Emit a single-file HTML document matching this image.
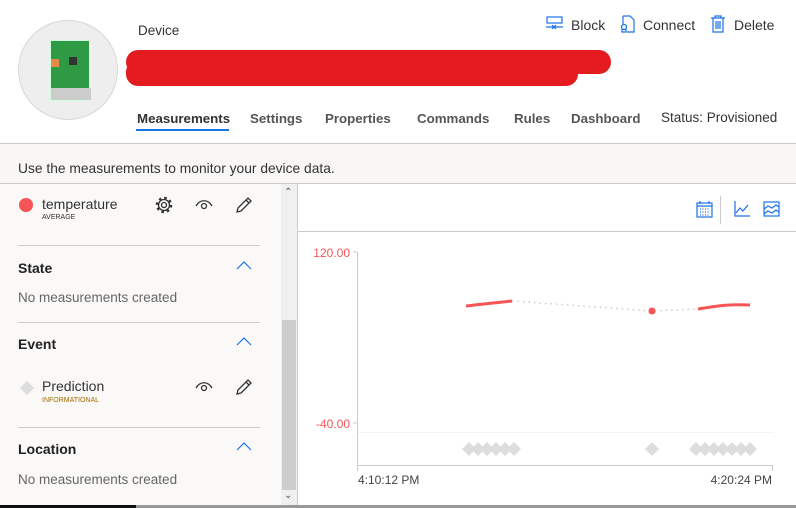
<!DOCTYPE html>
<html><head><style>
*{margin:0;padding:0;box-sizing:border-box}
body{width:796px;height:508px;overflow:hidden;background:#fff;font-family:"Liberation Sans",sans-serif;color:#333;position:relative}
.a{position:absolute}
.tab{position:absolute;top:111px;font-size:13.3px;font-weight:bold;color:#555}
.sec{position:absolute;left:18px;font-size:14px;font-weight:bold;color:#222}
.none{position:absolute;left:18px;font-size:13.5px;color:#666}
.hr{position:absolute;left:18px;width:242px;height:1px;background:#ccc}
.chev{position:absolute;left:236px}
</style></head><body>
<div class="a" style="left:18px;top:20px;width:100px;height:100px;border-radius:50%;background:#eeeeee;border:1px solid #d8d8d8"></div>
<div class="a" style="left:50px;top:40px;width:40px;height:61px;background:#2f9a44;border:1px solid #cfd">
<div class="a" style="left:0;top:18px;width:8px;height:8px;background:#e8894a"></div>
<div class="a" style="left:18px;top:16px;width:8px;height:8px;background:#333"></div>
<div class="a" style="left:0;bottom:0;width:40px;height:12px;background:#ccc"></div></div>
<div class="a" style="left:138px;top:23px;font-size:13.5px;color:#333">Device</div>
<div class="a" style="left:126px;top:50px;width:485px;height:24px;border-radius:12px;background:#e41c1f"></div>
<div class="a" style="left:126px;top:60px;width:452px;height:26px;border-radius:12px;background:#e41c1f"></div>
<div class="tab" style="left:137px;color:#333">Measurements</div>
<div class="a" style="left:136px;top:129px;width:93px;height:2px;background:#1a73e8"></div>
<div class="tab" style="left:250px">Settings</div>
<div class="tab" style="left:325px">Properties</div>
<div class="tab" style="left:417px">Commands</div>
<div class="tab" style="left:514px">Rules</div>
<div class="tab" style="left:571px">Dashboard</div>
<div class="a" style="left:661px;top:110px;font-size:13.5px;color:#333">Status: Provisioned</div>
<svg class="a" style="left:546px;top:16px" width="18" height="16" fill="none" stroke="#1a73e8" stroke-width="1.2"><rect x="1" y="1" width="15" height="6"/><path d="M0 11h17M6 9l4 4M10 9l-4 4"/></svg>
<div class="a" style="left:571px;top:17px;font-size:14px;color:#333">Block</div>
<svg class="a" style="left:620px;top:15px" width="16" height="18" fill="none" stroke="#1a73e8" stroke-width="1.2"><path d="M3 1h7l4 4v12H7M3 1v8"/><circle cx="4" cy="12" r="2.5"/><path d="M2 14v3h4v-3"/></svg>
<div class="a" style="left:643px;top:17px;font-size:14px;color:#333">Connect</div>
<svg class="a" style="left:710px;top:15px" width="16" height="18" fill="none" stroke="#1a73e8" stroke-width="1.2"><path d="M1 3h14M5 3V1h6v2M3 3v14h10V3M6 6v8M8 6v8M10 6v8"/></svg>
<div class="a" style="left:734px;top:17px;font-size:14px;color:#333">Delete</div>
<div class="a" style="left:0;top:143px;width:796px;height:41px;background:#f8f7f6;border-top:1px solid #ccc;border-bottom:1px solid #ccc"></div>
<div class="a" style="left:18px;top:161px;font-size:13.8px;color:#333">Use the measurements to monitor your device data.</div>
<div class="a" style="left:0;top:184px;width:281px;height:321px;background:#faf9f8"></div>
<div class="a" style="left:281px;top:184px;width:16px;height:321px;background:#f0f0f0"></div>
<div class="a" style="left:282px;top:320px;width:14px;height:170px;background:#cdcdcd"></div>
<div class="a" style="left:284px;top:187px;font-size:10px;color:#555">&#8963;</div>
<div class="a" style="left:284px;top:490px;font-size:10px;color:#555">&#8964;</div>
<div class="a" style="left:297px;top:184px;width:1px;height:321px;background:#ccc"></div>
<div class="a" style="left:19px;top:198px;width:14px;height:14px;border-radius:50%;background:#f65556"></div>
<div class="a" style="left:42px;top:196px;font-size:14px;color:#333">temperature</div>
<div class="a" style="left:42px;top:214px;font-size:7px;color:#333">AVERAGE</div>
<svg class="a" style="left:155px;top:196px" width="18" height="18" fill="none" stroke="#333" stroke-width="1.3"><circle cx="9" cy="9" r="2.5"/><circle cx="9" cy="9" r="5.5"/><circle cx="9" cy="9" r="7" stroke-dasharray="2.5 3" stroke-width="2.4"/></svg>
<svg class="a" style="left:195px;top:199px" width="18" height="12" fill="none" stroke="#333" stroke-width="1.3"><path d="M1 7C5 0 13 0 17 7"/><circle cx="9" cy="7" r="2.5"/></svg>
<svg class="a" style="left:235px;top:196px" width="18" height="18" fill="none" stroke="#333" stroke-width="1.3"><path d="M2 16l1-4L13 2l3 3L6 15z M11 4l3 3"/></svg>
<div class="hr" style="top:245px"></div>
<div class="sec" style="top:260px">State</div>
<svg class="chev" style="top:261px" width="16" height="9" fill="none" stroke="#1a73e8" stroke-width="1.2"><path d="M1 8l7-7 7 7"/></svg>
<div class="none" style="top:290px">No measurements created</div>
<div class="hr" style="top:322px"></div>
<div class="sec" style="top:336px">Event</div>
<svg class="chev" style="top:337px" width="16" height="9" fill="none" stroke="#1a73e8" stroke-width="1.2"><path d="M1 8l7-7 7 7"/></svg>
<div class="a" style="left:22px;top:383px;width:10px;height:10px;background:#ddd;transform:rotate(45deg)"></div>
<div class="a" style="left:42px;top:378px;font-size:14px;color:#333">Prediction</div>
<div class="a" style="left:42px;top:397px;font-size:7px;color:#a26a00">INFORMATIONAL</div>
<svg class="a" style="left:195px;top:381px" width="18" height="12" fill="none" stroke="#333" stroke-width="1.3"><path d="M1 7C5 0 13 0 17 7"/><circle cx="9" cy="7" r="2.5"/></svg>
<svg class="a" style="left:235px;top:378px" width="18" height="18" fill="none" stroke="#333" stroke-width="1.3"><path d="M2 16l1-4L13 2l3 3L6 15z M11 4l3 3"/></svg>
<div class="hr" style="top:427px"></div>
<div class="sec" style="top:441px">Location</div>
<svg class="chev" style="top:442px" width="16" height="9" fill="none" stroke="#1a73e8" stroke-width="1.2"><path d="M1 8l7-7 7 7"/></svg>
<div class="none" style="top:472px">No measurements created</div>
<div class="a" style="left:0;top:505px;width:136px;height:3px;background:#111"></div>
<div class="a" style="left:136px;top:505px;width:660px;height:3px;background:#999"></div>
<div class="a" style="left:298px;top:231px;width:498px;height:1px;background:#ccc"></div>
<div class="a" style="left:720px;top:196px;width:1px;height:28px;background:#ccc"></div>
<svg class="a" style="left:696px;top:201px" width="18" height="17" fill="none" stroke="#1a73e8" stroke-width="1.2"><rect x="1" y="2" width="15" height="14"/><path d="M1 5h15M4 0v3M13 0v3" /><path d="M4 8h10M4 11h10M4 14h10" stroke-dasharray="1 1.5"/></svg>
<svg class="a" style="left:734px;top:201px" width="16" height="16" fill="none" stroke="#1a73e8" stroke-width="1.2"><path d="M1 0v15h15M2 12l4-5 3 3 5-6"/></svg>
<svg class="a" style="left:763px;top:201px" width="17" height="16" fill="none" stroke="#1a73e8" stroke-width="1.2"><rect x="1" y="1" width="15" height="14"/><path d="M1 8l4-3 4 2 4-3 3 2M1 13l4-3 4 2 4-3 3 2"/></svg>
<svg class="a" style="left:298px;top:232px" width="498" height="273">
<g font-family="Liberation Sans" font-size="12">
<text x="52" y="25" fill="#f65556" text-anchor="end">120.00</text>
<text x="52" y="196" fill="#f65556" text-anchor="end">-40.00</text>
<text x="60" y="252" fill="#444">4:10:12 PM</text>
<text x="474" y="252" fill="#444" text-anchor="end">4:20:24 PM</text></g>
<path d="M55 20h4M55 191h4M59.5 20v214M59 233.5h416M474.5 233v6M59.5 233v6" stroke="#ccc" fill="none"/>
<path d="M60 200.5h416" stroke="#f4f4f4"/>
<path d="M168 74C185 72 195 71 214 69" stroke="#f65556" stroke-width="3" fill="none"/>
<path d="M214 69L354 79L400 77" stroke="#ccc" stroke-width="1.5" stroke-dasharray="1.5 4" fill="none"/>
<path d="M400 77C420 74 430 72 452 73" stroke="#f65556" stroke-width="3" fill="none"/>
<circle cx="354" cy="79" r="3.5" fill="#f65556"/>
<g fill="#ddd">
<path d="M164 217l7-7 7 7-7 7zM173 217l7-7 7 7-7 7zM182 217l7-7 7 7-7 7zM191 217l7-7 7 7-7 7zM200 217l7-7 7 7-7 7zM209 217l7-7 7 7-7 7zM347 217l7-7 7 7-7 7z"/>
<path d="M391 217l7-7 7 7-7 7zM400 217l7-7 7 7-7 7zM409 217l7-7 7 7-7 7zM418 217l7-7 7 7-7 7zM427 217l7-7 7 7-7 7zM436 217l7-7 7 7-7 7zM445 217l7-7 7 7-7 7z"/></g>
</svg>
</body></html>
